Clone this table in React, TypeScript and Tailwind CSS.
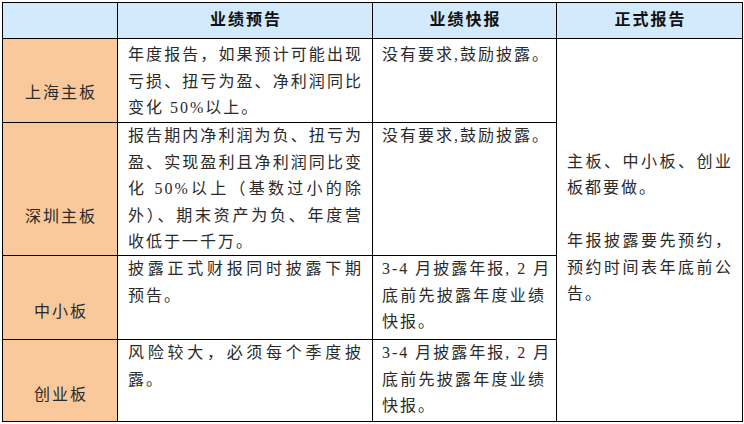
const Line = ({ text, full }: { text: string; full?: boolean }) => (
  <div className={full ? "whitespace-nowrap text-justify [text-align-last:justify]" : "whitespace-nowrap"}>
    {text}
  </div>
);

const Lines = ({ lines }: { lines: string[] }) => (
  <>
    {lines.map((l, i) => (
      <Line key={i} text={l} full={i < lines.length - 1} />
    ))}
  </>
);

const Label = ({ text, pb }: { text: string; pb: string }) => (
  <div className={`flex items-end justify-center bg-[#f9c99c] pl-[2px] ${pb}`}>{text}</div>
);

const Head = ({ text }: { text: string }) => (
  <div className="flex items-center justify-center bg-[#d2eafb] pl-[2px] font-bold text-[#111]">{text}</div>
);

const App = () => {
  return (
    <div className="h-[424px] w-[744px] bg-white pl-[2px] pt-[2px] font-['Liberation_Serif','Noto_Sans_CJK_SC',serif] text-[16px] leading-[26.5px] tracking-[2px] text-[#2a2a2a]">
      <div className="grid w-[741px] grid-cols-[114px_254px_183px_185px] grid-rows-[35px_83px_132px_83px_81px] gap-px border border-black bg-black">
        <div className="bg-[#d2eafb]" />
        <Head text="业绩预告" />
        <Head text="业绩快报" />
        <Head text="正式报告" />

        {/* 上海主板 */}
        <Label text="上海主板" pb="pb-[16px]" />
        <div className="bg-white pl-[10px] pr-[9px] pt-[3px]">
          <Lines lines={["年度报告，如果预计可能出现", "亏损、扭亏为盈、净利润同比", "变化 50%以上。"]} />
        </div>
        <div className="bg-white pl-[9px] pr-[10px] pt-[3px]">
          <Line text="没有要求,鼓励披露。" full />
        </div>
        <div className="row-span-4 flex flex-col justify-center bg-white pl-[10px] pr-[9px] pb-[4px]">
          <Line text="主板、中小板、创业" full />
          <Line text="板都要做。" />
          <div className="h-[26.5px]" />
          <Line text="年报披露要先预约，" full />
          <Line text="预约时间表年底前公" full />
          <Line text="告。" />
        </div>

        {/* 深圳主板 */}
        <Label text="深圳主板" pb="pb-[25px]" />
        <div className="bg-white pl-[10px] pr-[9px]">
          <Lines
            lines={[
              "报告期内净利润为负、扭亏为",
              "盈、实现盈利且净利润同比变",
              "化 50%以上（基数过小的除",
              "外）、期末资产为负、年度营",
              "收低于一千万。",
            ]}
          />
        </div>
        <div className="bg-white pl-[9px] pr-[10px]">
          <Line text="没有要求,鼓励披露。" full />
        </div>

        {/* 中小板 */}
        <Label text="中小板" pb="pb-[14px]" />
        <div className="bg-white pl-[10px] pr-[9px]">
          <Lines lines={["披露正式财报同时披露下期", "预告。"]} />
        </div>
        <div className="bg-white pl-[9px] pr-[10px]">
          <Lines lines={["3-4 月披露年报, 2 月", "底前先披露年度业绩", "快报。"]} />
        </div>

        {/* 创业板 */}
        <Label text="创业板" pb="pb-[13px]" />
        <div className="bg-white pl-[10px] pr-[9px]">
          <Lines lines={["风险较大，必须每个季度披", "露。"]} />
        </div>
        <div className="bg-white pl-[9px] pr-[10px]">
          <Lines lines={["3-4 月披露年报, 2 月", "底前先披露年度业绩", "快报。"]} />
        </div>
      </div>
    </div>
  );
};

export default App;
